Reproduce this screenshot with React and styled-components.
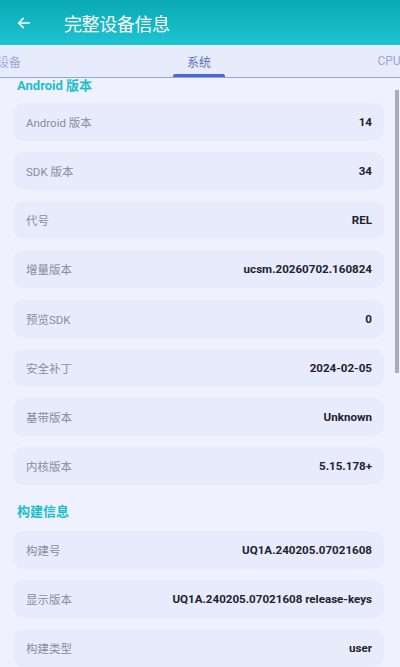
import React from "react";
import styled, { createGlobalStyle } from "styled-components";

const GlobalStyle = createGlobalStyle`
  html, body {
    margin: 0;
    padding: 0;
    background: #eff2fe;
  }
  body {
    font-family: Roboto, "Noto Sans CJK SC", sans-serif;
    overflow: hidden;
  }
`;

const Screen = styled.div`
  width: 400px;
  height: 667px;
  display: flex;
  flex-direction: column;
  overflow: hidden;
  background: #eff2fe;
`;

const AppBar = styled.div`
  height: 45px;
  flex-shrink: 0;
  display: flex;
  align-items: center;
  gap: 32px;
  padding-left: 16px;
  background: linear-gradient(180deg, #0aa9b6 0%, #1ec4d0 100%);
`;

const Title = styled.div`
  color: #ffffff;
  font-size: 18px;
  letter-spacing: -0.4px;
`;

const TabBar = styled.div`
  height: 32px;
  flex-shrink: 0;
  background: #e6ecfb;
  border-bottom: 1px solid #93a6e2;
  overflow: hidden;
`;

const TabStrip = styled.div`
  display: flex;
  height: 100%;
  margin-left: -86px;
`;

const Tab = styled.div`
  position: relative;
  width: 190px;
  flex-shrink: 0;
  display: flex;
  align-items: center;
  justify-content: center;
  font-size: 12px;
  color: ${(p) => (p.active ? "#5a6ec6" : "#9ba8d8")};

  &::after {
    content: "";
    display: ${(p) => (p.active ? "block" : "none")};
    position: absolute;
    bottom: 0;
    left: 50%;
    width: 52px;
    height: 3px;
    margin-left: -26px;
    border-radius: 2px 2px 0 0;
    background: #4b67d6;
  }
`;

const Content = styled.div`
  position: relative;
  flex: 1;
  overflow: hidden;
  padding: 1px 16px 0 13px;
`;

const ScrollThumb = styled.div`
  position: absolute;
  right: 1px;
  top: 12px;
  width: 4px;
  height: 283px;
  background: #a9abb6;
`;

const SectionTitle = styled.div`
  font-size: 13px;
  font-weight: 700;
  line-height: 14px;
  color: #1bbfcc;
  padding-left: 4px;
  margin: ${(p) => (p.first ? "0 0 10px" : "20px 0 12px")};
`;

const List = styled.div`
  display: flex;
  flex-direction: column;
  gap: 11.15px;
`;

const Row = styled.div`
  height: 38px;
  display: flex;
  align-items: center;
  justify-content: space-between;
  padding: 0 12px 0 13px;
  border-radius: 11px;
  background: #e7ebfb;
`;

const Label = styled.span`
  font-size: 11.5px;
  color: #8a8d9c;
`;

const Value = styled.span`
  font-size: 11.6px;
  font-weight: 700;
  color: #1f2230;
`;

const BackArrow = () => (
  <svg width="16" height="16" viewBox="0 0 24 24" fill="none" stroke="#fff" strokeWidth="2.4" strokeLinecap="round" strokeLinejoin="round">
    <path d="M20 12H4" />
    <path d="M11 5l-7 7 7 7" />
  </svg>
);

const sections = [
  {
    title: "Android 版本",
    rows: [
      ["Android 版本", "14"],
      ["SDK 版本", "34"],
      ["代号", "REL"],
      ["增量版本", "ucsm.20260702.160824"],
      ["预览SDK", "0"],
      ["安全补丁", "2024-02-05"],
      ["基带版本", "Unknown"],
      ["内核版本", "5.15.178+"],
    ],
  },
  {
    title: "构建信息",
    rows: [
      ["构建号", "UQ1A.240205.07021608"],
      ["显示版本", "UQ1A.240205.07021608 release-keys"],
      ["构建类型", "user"],
    ],
  },
];

export default function App() {
  return (
    <Screen>
      <GlobalStyle />
      <AppBar>
        <BackArrow />
        <Title>完整设备信息</Title>
      </AppBar>
      <TabBar>
        <TabStrip>
          <Tab>设备</Tab>
          <Tab active>系统</Tab>
          <Tab>CPU</Tab>
        </TabStrip>
      </TabBar>
      <Content>
        {sections.map((s, i) => (
          <div key={s.title}>
            <SectionTitle first={i === 0}>{s.title}</SectionTitle>
            <List>
              {s.rows.map(([k, v]) => (
                <Row key={k}>
                  <Label>{k}</Label>
                  <Value>{v}</Value>
                </Row>
              ))}
            </List>
          </div>
        ))}
        <ScrollThumb />
      </Content>
    </Screen>
  );
}
